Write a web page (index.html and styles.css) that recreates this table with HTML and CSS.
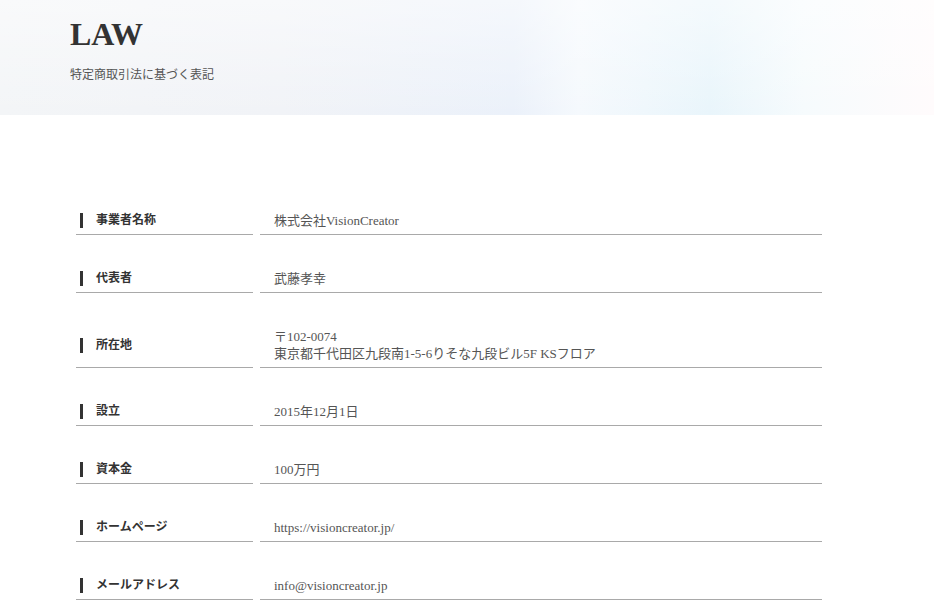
FILE: index.html
```html
<!DOCTYPE html>
<html lang="ja">
<head>
<meta charset="utf-8">
<title>LAW</title>
<link rel="stylesheet" href="styles.css">
</head>
<body>
<header class="hero">
  <h1 class="hero-title">LAW</h1>
  <p class="hero-sub">特定商取引法に基づく表記</p>
</header>
<main class="content">
  <dl class="law-table">
    <div class="row"><dt class="label">事業者名称</dt><dd class="value">株式会社VisionCreator</dd></div>
    <div class="row"><dt class="label">代表者</dt><dd class="value">武藤孝幸</dd></div>
    <div class="row"><dt class="label">所在地</dt><dd class="value">〒102-0074<br>東京都千代田区九段南1-5-6りそな九段ビル5F KSフロア</dd></div>
    <div class="row"><dt class="label">設立</dt><dd class="value">2015年12月1日</dd></div>
    <div class="row"><dt class="label">資本金</dt><dd class="value">100万円</dd></div>
    <div class="row"><dt class="label">ホームページ</dt><dd class="value">https://visioncreator.jp/</dd></div>
    <div class="row"><dt class="label">メールアドレス</dt><dd class="value">info@visioncreator.jp</dd></div>
  </dl>
</main>
</body>
</html>
```
FILE: styles.css
```css
* { box-sizing: border-box; }
html, body { margin: 0; padding: 0; background: #fff; }
body {
  font-family: "Liberation Serif", "Noto Sans CJK JP", serif;
  color: #333;
}
.hero {
  height: 115px;
  padding: 14px 0 0 70px;
  background:
    linear-gradient(180deg, rgba(255,255,255,0.5) 0%, rgba(255,255,255,0) 100%),
    linear-gradient(90deg, #f3f5f7 0%, #f1f3f7 30%, #ebf1fa 55%, #f5f9fd 62%, #e9f5fb 76%, #f6fbfd 86%, #fffbfc 100%);
}
.hero-title {
  margin: 0;
  font-size: 32px;
  line-height: 40px;
  font-weight: 700;
  color: #333;
}
.hero-sub {
  margin: 13px 0 0;
  font-size: 12px;
  line-height: 16px;
  color: #555;
}
.content {
  padding: 96px 0 40px 76px;
}
.law-table {
  margin: 0;
  width: 746px;
}
.row {
  display: flex;
  gap: 7px;
  margin-top: 34px;
}
.row:first-child { margin-top: 0; }
.label {
  width: 177px;
  flex: none;
  display: flex;
  align-items: center;
  padding: 1px 0 5px 4px;
  border-bottom: 1px solid #a9a9a9;
  font-size: 12px;
  line-height: 17px;
  font-weight: 700;
  color: #333;
}
.label::before {
  content: "";
  width: 3px;
  height: 15px;
  background: #333;
  margin-right: 13px;
  flex: none;
}
.value {
  flex: 1;
  margin: 0;
  padding: 1px 0 5px 14px;
  border-bottom: 1px solid #a9a9a9;
  font-size: 13px;
  line-height: 17px;
  color: #555;
}
```
